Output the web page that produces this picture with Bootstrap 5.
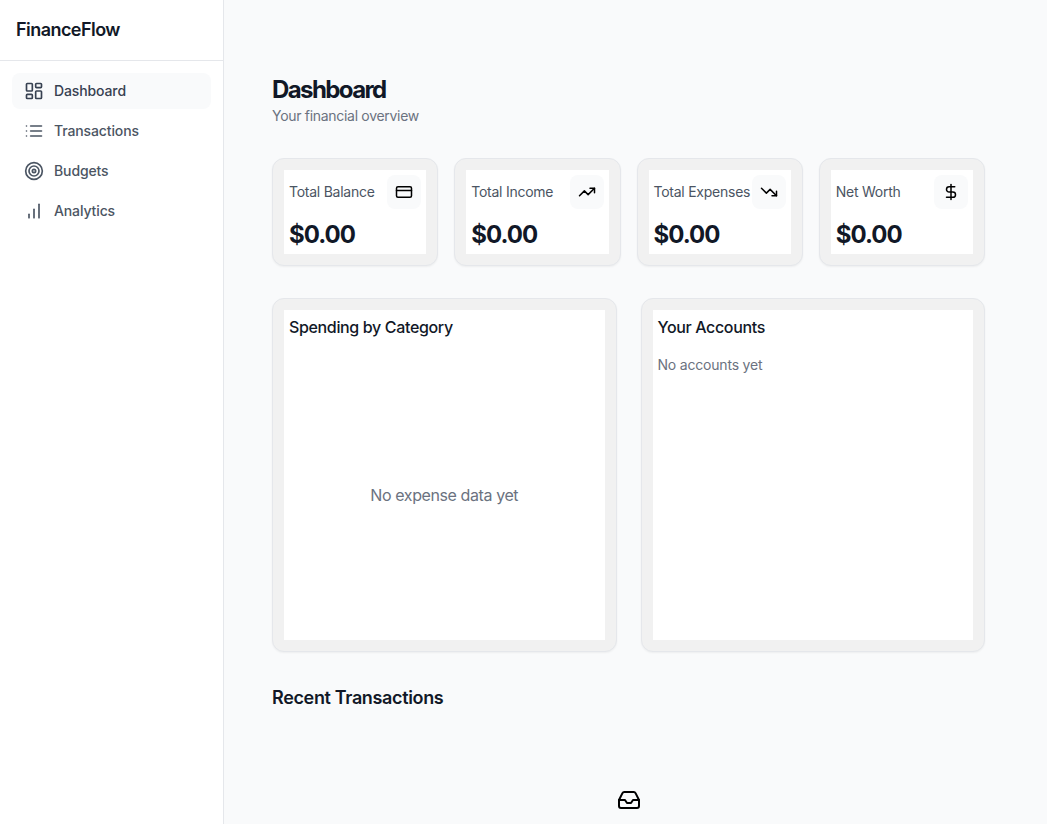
<!DOCTYPE html>
<html lang="en">
<head>
    <meta charset="UTF-8">
    <meta name="viewport" content="width=device-width, initial-scale=1.0">
    <title>FinanceFlow - Dashboard</title>
    <link href="https://cdn.jsdelivr.net/npm/bootstrap@5.3.0/dist/css/bootstrap.min.css" rel="stylesheet">
    <style>
        html, body { height: 100%; overflow: hidden; }
        body { font-family: Inter, "Liberation Sans", sans-serif; background: #f9fafb; color: #111827; }
        svg { fill: none; stroke: currentColor; stroke-width: 2; stroke-linecap: round; stroke-linejoin: round; flex-shrink: 0; }

        .side-panel { width: 224px; height: 824px; background: #fff; border-right: 1px solid #e5e7eb; flex-shrink: 0; }
        .brand-box { height: 61px; padding: 0 16px; border-bottom: 1px solid #e5e7eb; }
        .brand-name { font-size: 18px; font-weight: 600; letter-spacing: -0.55px; margin: 0; }
        .side-nav { padding: 12px; }
        .side-link { height: 36px; padding: 0 12px; margin-bottom: 4px; border-radius: 8px; font-size: 14px; font-weight: 500; letter-spacing: -0.12px; color: #4b5563; text-decoration: none; gap: 10px; }
        .side-link.is-active { background: #f9fafb; color: #374151; }
        .side-text { margin-top: -2px; }

        .main-area { padding: 48px 62px 0 48px; flex-grow: 1; min-width: 0; }
        .page-title { font-size: 24px; font-weight: 700; letter-spacing: -1.6px; line-height: 32px; margin: 26px 0 0; }
        .page-sub { font-size: 14px; line-height: 20px; letter-spacing: -0.3px; color: #6b7280; margin: 0 0 32px; }

        .tile { background: #f1f1f1; border: 1px solid #e5e7eb; border-radius: 12px; padding: 11px; box-shadow: 0 1px 2px rgba(0,0,0,.05); }
        .tile-inner { background: #fff; }
        .stat-inner { height: 84px; padding: 5px 5px 0; }
        .stat-label { font-size: 14px; letter-spacing: -0.25px; color: #4b5563; white-space: nowrap; margin-top: -2px; }
        .stat-icon { width: 34px; height: 34px; border-radius: 8px; background: #f9fafb; color: #000; }
        .stat-value { font-size: 24px; font-weight: 700; letter-spacing: -1px; line-height: 32px; margin-top: 10px; }

        .chart-row { margin-top: 8px; }
        .chart-inner { height: 330px; padding: 5px; }
        .chart-title { font-size: 16px; font-weight: 500; line-height: 24px; letter-spacing: -0.35px; margin: 0; }
        .chart-empty { height: 312px; color: #6b7280; font-size: 16px; letter-spacing: -0.4px; }
        .acct-empty { font-size: 14px; line-height: 20px; letter-spacing: -0.2px; color: #6b7280; margin: 16px 0 0; }

        .recent-title { font-size: 18px; font-weight: 600; line-height: 28px; letter-spacing: -0.35px; margin: 32px 0 0; }
        .recent-empty { padding-top: 76px; color: #000; }
    </style>
</head>
<body>
    <div class="d-flex">
        <!-- Sidebar -->
        <aside class="side-panel">
            <div class="brand-box d-flex align-items-center">
                <h1 class="brand-name">FinanceFlow</h1>
            </div>
            <nav class="side-nav">
                <a href="#" class="side-link is-active d-flex align-items-center">
                    <svg width="20" height="20" viewBox="0 0 24 24"><rect x="3" y="3" width="7" height="9" rx="1"/><rect x="14" y="3" width="7" height="5" rx="1"/><rect x="14" y="12" width="7" height="9" rx="1"/><rect x="3" y="16" width="7" height="5" rx="1"/></svg>
                    <span class="side-text">Dashboard</span>
                </a>
                <a href="#" class="side-link d-flex align-items-center">
                    <svg width="20" height="20" viewBox="0 0 24 24"><path d="M8 6h13"/><path d="M8 12h13"/><path d="M8 18h13"/><path d="M3 6h.01"/><path d="M3 12h.01"/><path d="M3 18h.01"/></svg>
                    <span class="side-text">Transactions</span>
                </a>
                <a href="#" class="side-link d-flex align-items-center">
                    <svg width="20" height="20" viewBox="0 0 24 24"><circle cx="12" cy="12" r="10"/><circle cx="12" cy="12" r="6"/><circle cx="12" cy="12" r="2"/></svg>
                    <span class="side-text">Budgets</span>
                </a>
                <a href="#" class="side-link d-flex align-items-center">
                    <svg width="20" height="20" viewBox="0 0 24 24"><path d="M18 20V4"/><path d="M12 20V10"/><path d="M6 20v-4"/></svg>
                    <span class="side-text">Analytics</span>
                </a>
            </nav>
        </aside>

        <!-- Main -->
        <main class="main-area">
            <h2 class="page-title">Dashboard</h2>
            <p class="page-sub">Your financial overview</p>

            <div class="row row-cols-4 g-3">
                <div class="col">
                    <div class="tile"><div class="tile-inner stat-inner">
                        <div class="d-flex justify-content-between align-items-center">
                            <span class="stat-label">Total Balance</span>
                            <span class="stat-icon d-flex align-items-center justify-content-center">
                                <svg width="18" height="18" viewBox="0 0 24 24"><rect x="2" y="5" width="20" height="14" rx="2"/><path d="M2 10h20"/></svg>
                            </span>
                        </div>
                        <div class="stat-value">$0.00</div>
                    </div></div>
                </div>
                <div class="col">
                    <div class="tile"><div class="tile-inner stat-inner">
                        <div class="d-flex justify-content-between align-items-center">
                            <span class="stat-label">Total Income</span>
                            <span class="stat-icon d-flex align-items-center justify-content-center">
                                <svg width="18" height="18" viewBox="0 0 24 24"><path d="M22 7l-8.5 8.5-5-5L2 17"/><path d="M16 7h6v6"/></svg>
                            </span>
                        </div>
                        <div class="stat-value">$0.00</div>
                    </div></div>
                </div>
                <div class="col">
                    <div class="tile"><div class="tile-inner stat-inner">
                        <div class="d-flex justify-content-between align-items-center">
                            <span class="stat-label">Total Expenses</span>
                            <span class="stat-icon d-flex align-items-center justify-content-center">
                                <svg width="18" height="18" viewBox="0 0 24 24"><path d="M22 17l-8.5-8.5-5 5L2 7"/><path d="M16 17h6v-6"/></svg>
                            </span>
                        </div>
                        <div class="stat-value">$0.00</div>
                    </div></div>
                </div>
                <div class="col">
                    <div class="tile"><div class="tile-inner stat-inner">
                        <div class="d-flex justify-content-between align-items-center">
                            <span class="stat-label">Net Worth</span>
                            <span class="stat-icon d-flex align-items-center justify-content-center">
                                <svg width="18" height="18" viewBox="0 0 24 24"><path d="M12 2v20"/><path d="M17 5H9.5a3.5 3.5 0 0 0 0 7h5a3.5 3.5 0 0 1 0 7H6"/></svg>
                            </span>
                        </div>
                        <div class="stat-value">$0.00</div>
                    </div></div>
                </div>
            </div>

            <div class="row g-4 chart-row">
                <div class="col-6">
                    <div class="tile"><div class="tile-inner chart-inner">
                        <h3 class="chart-title">Spending by Category</h3>
                        <div class="chart-empty d-flex align-items-center justify-content-center">No expense data yet</div>
                    </div></div>
                </div>
                <div class="col-6">
                    <div class="tile"><div class="tile-inner chart-inner">
                        <h3 class="chart-title">Your Accounts</h3>
                        <p class="acct-empty">No accounts yet</p>
                    </div></div>
                </div>
            </div>

            <h3 class="recent-title">Recent Transactions</h3>
            <div class="recent-empty d-flex justify-content-center">
                <svg width="24" height="24" viewBox="0 0 24 24"><path d="M22 12h-6l-2 3h-4l-2-3H2"/><path d="M5.45 5.11L2 12v6a2 2 0 0 0 2 2h16a2 2 0 0 0 2-2v-6l-3.45-6.89A2 2 0 0 0 16.76 4H7.24a2 2 0 0 0-1.79 1.11z"/></svg>
            </div>
        </main>
    </div>
    <script src="https://cdn.jsdelivr.net/npm/bootstrap@5.3.0/dist/js/bootstrap.bundle.min.js"></script>
</body>
</html>
